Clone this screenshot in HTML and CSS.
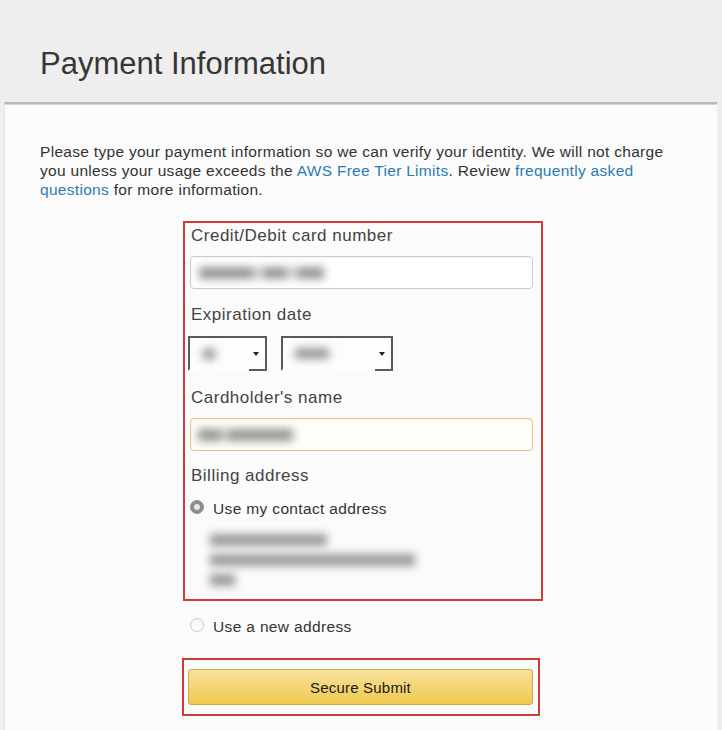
FILE: index.html
```html
<!DOCTYPE html>
<html lang="en">
<head>
<meta charset="utf-8">
<title>Payment Information</title>
<link rel="stylesheet" href="styles.css">
</head>
<body>
<div class="page">
  <header class="header">
    <h1 class="title">Payment Information</h1>
  </header>
  <main class="panel">
    <p class="intro">Please type your payment information so we can verify your identity. We will not charge you unless your usage exceeds the <a class="link" href="#">AWS Free Tier Limits</a>. Review <a class="link" href="#">frequently asked questions</a> for more information.</p>
    <div class="form">
      <div class="redbox card-box">
        <div class="label">Credit/Debit card number</div>
        <div class="input input-card"><span class="blob blob-card"></span></div>
        <div class="label label-gap">Expiration date</div>
        <div class="selects">
          <div class="select select-month"><span class="blob blob-month"></span><span class="arrow"></span></div>
          <div class="select select-year"><span class="blob blob-year"></span><span class="arrow"></span></div>
        </div>
        <div class="label label-gap2">Cardholder's name</div>
        <div class="input input-name"><span class="blob blob-name"></span></div>
        <div class="label label-gap3">Billing address</div>
        <div class="radio-row radio-row-first">
          <span class="radio radio-on"></span>
          <span class="radio-text">Use my contact address</span>
        </div>
        <div class="address">
          <div class="addr-line"><span class="blob blob-a1"></span></div>
          <div class="addr-line"><span class="blob blob-a2"></span></div>
          <div class="addr-line"><span class="blob blob-a3"></span></div>
        </div>
      </div>
      <div class="radio-row radio-row-new">
        <span class="radio radio-off"></span>
        <span class="radio-text">Use a new address</span>
      </div>
      <div class="redbox button-box">
        <button class="submit" type="button">Secure Submit</button>
      </div>
    </div>
  </main>
</div>
</body>
</html>
```
FILE: styles.css
```css
html, body {
  margin: 0;
  padding: 0;
}
body {
  background: #eeeeee;
  font-family: "Liberation Sans", Arial, Helvetica, sans-serif;
  color: #333;
}
.page {
  height: 730px;
  display: flex;
  flex-direction: column;
  overflow: hidden;
}
.header {
  height: 102px;
  box-sizing: border-box;
  padding: 46px 0 0 40px;
  background: #eeeeee;
}
.title {
  margin: 0;
  font-weight: normal;
  font-size: 31px;
  line-height: 36px;
  color: #363636;
}
.panel {
  flex: 1;
  margin: 0 5px 0 4px;
  background: #fbfbfb;
  border-top: 2px solid #b9b9b9;
  border-left: 1px solid #e4e4e4;
  box-shadow: inset 0 1px 0 #d8d8d8;
  padding: 38px 0 0 35px;
}
.intro {
  margin: 0;
  width: 640px;
  font-size: 15.5px;
  line-height: 19px;
  letter-spacing: 0.3px;
  color: #333;
}
.link {
  color: #2b7bb2;
  text-decoration: none;
}
.form {
  margin: 22px 0 0 141px;
  width: 362px;
}
.redbox {
  box-sizing: border-box;
  border: 2px solid #cf3c37;
}
.card-box {
  margin-left: 2px;
  width: 360px;
  height: 380px;
  padding: 3px 8px 0 5px;
}
.label {
  font-size: 17px;
  line-height: 20px;
  letter-spacing: 0.5px;
  color: #444;
  padding-left: 1px;
}
.label-gap { margin-top: 16px; }
.label-gap2 { margin-top: 17px; }
.label-gap3 { margin-top: 15px; }
.input {
  box-sizing: border-box;
  height: 33px;
  border: 1px solid #cbcbcb;
  border-radius: 4px;
  background: #fff;
  box-shadow: inset 0 1px 1px rgba(0,0,0,0.04);
  display: flex;
  align-items: center;
  padding-left: 8px;
}
.input-card { margin-top: 10px; }
.input-name {
  margin-top: 10px;
  border-color: #e3c57e;
  background: #fffdf7;
  padding-left: 7px;
}
.blob {
  display: block;
  filter: blur(4px);
}
.blob-card {
  width: 125px;
  height: 12px;
  background: linear-gradient(to right, #959595 0 43%, #cfcfcf 43% 52%, #959595 52% 70%, #cfcfcf 70% 79%, #959595 79%);
}
.blob-name {
  width: 95px;
  height: 12px;
  background: linear-gradient(to right, #959595 0 24%, #cfcfcf 24% 32%, #959595 32%);
}
.selects {
  margin: 11px 0 0 -2px;
  display: flex;
  gap: 14px;
}
.select {
  position: relative;
  box-sizing: border-box;
  height: 35px;
  border: 2px solid #5a5a5a;
  border-bottom-color: transparent;
  background: #fdfdfd;
  display: flex;
  align-items: center;
  padding-left: 12px;
}
.select::after {
  content: "";
  position: absolute;
  right: -2px;
  bottom: -2px;
  width: 18px;
  height: 2px;
  background: #5a5a5a;
}
.select-month { width: 79px; }
.select-year { width: 112px; }
.blob-month {
  width: 14px;
  height: 12px;
  border-radius: 6px;
  background: #999;
}
.blob-year {
  width: 34px;
  height: 11px;
  background: #999;
}
.arrow {
  position: absolute;
  right: 6px;
  top: 14px;
  width: 0;
  height: 0;
  border-left: 3px solid transparent;
  border-right: 3px solid transparent;
  border-top: 4px solid #222;
}
.radio-row {
  display: flex;
  align-items: flex-start;
  font-size: 15.5px;
  line-height: 20px;
  letter-spacing: 0.35px;
  color: #333;
}
.radio-row-first { margin-top: 13px; }
.radio {
  box-sizing: border-box;
  flex: none;
  width: 14px;
  height: 14px;
  border-radius: 50%;
  margin: 1px 9px 0 0;
}
.radio-on {
  background: radial-gradient(circle, #e8e8e8 0 2.5px, #8e8e8e 3.5px);
  border: 1px solid #8a8a8a;
}
.radio-off {
  background: linear-gradient(#f4f4f4, #ffffff);
  border: 1px solid #c9c9c9;
}
.address {
  margin: 11px 0 0 20px;
}
.addr-line {
  height: 20px;
  display: flex;
  align-items: center;
}
.addr-line .blob {
  height: 12px;
  background: #9a9a9a;
}
.blob-a1 { width: 117px; }
.blob-a2 { width: 205px; }
.blob-a3 { width: 25px; }
.radio-row-new {
  margin: 16px 0 0 9px;
}
.button-box {
  margin: 21px 0 0 1px;
  width: 358px;
  height: 58px;
  padding: 9px 5px 0 4px;
}
.submit {
  display: block;
  width: 100%;
  height: 36px;
  box-sizing: border-box;
  border: 1px solid #c9aa55;
  border-radius: 3px;
  background: linear-gradient(#f7e19c, #f0c94f);
  font-family: "Liberation Sans", Arial, Helvetica, sans-serif;
  font-size: 15px;
  color: #1a1a1a;
  letter-spacing: 0.2px;
  padding: 0;
}
```
